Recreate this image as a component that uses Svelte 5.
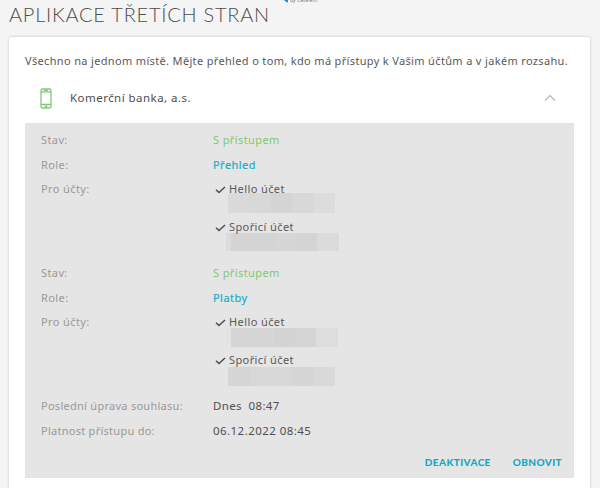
<script>
  const groups = [
    {
      role: 'Přehled',
      accounts: [
        { name: 'Hello účet', x: 15, top: 6, h: 20, cells: [[21, '#dadada'], [22, '#d8d8d8'], [21, '#d4d4d4'], [22, '#d8d8d8'], [21, '#dcdcdc']] },
        { name: 'Spořicí účet', x: 13, top: 7, h: 18, cells: [[5, '#dcdcdc'], [44, '#d4d4d4'], [22, '#d6d6d6'], [20, '#d4d4d4'], [22, '#dbdbdb']] }
      ]
    },
    {
      role: 'Platby',
      accounts: [
        { name: 'Hello účet', x: 13, top: 8, h: 19, cells: [[5, '#e3e3e3'], [43, '#d5d5d5'], [21, '#d3d3d3'], [21, '#d5d5d5'], [22, '#dddddd']] },
        { name: 'Spořicí účet', x: 15, top: 7.5, h: 19, cells: [[23, '#d5d5d5'], [41, '#d8d8d8'], [21, '#d6d6d6'], [22, '#d9d9d9']] }
      ]
    }
  ];
</script>

<div class="page">
  <div class="brand">
    <svg width="5" height="3" viewBox="0 0 5 3"><path d="M0 0H4V2L3 2.6Z" fill="#1495bd" /></svg>
    <span>by Cetelem</span>
  </div>
  <h1>APLIKACE TŘETÍCH STRAN</h1>
  <section class="card">
    <p class="intro">Všechno na jednom místě. Mějte přehled o tom, kdo má přístupy k Vašim účtům a v jakém rozsahu.</p>
    <div class="bank">
      <svg class="phone" width="12" height="21" viewBox="0 0 12 21" fill="none" stroke="#80c878" stroke-width="1.3">
        <rect x="1" y="1" width="10" height="19" rx="1.5" />
        <path d="M1 3.9H11M1 16.5H11M4 2.4H8" />
        <path d="M4.7 18.4H7.3" stroke-width="1.6" />
      </svg>
      <span class="bank-name">Komerční banka, a.s.</span>
      <svg class="chevron" width="12" height="8" viewBox="0 0 12 8" fill="none" stroke="#bfbfbf" stroke-width="1.5"><path d="M1.2 6.5L6 1.6L10.8 6.5" /></svg>
    </div>
    <div class="panel">
      {#each groups as g}
        <div class="group">
          <div class="row"><span class="label">Stav:</span><span class="green">S přístupem</span></div>
          <div class="row"><span class="label">Role:</span><span class="blue">{g.role}</span></div>
          <div class="row accounts">
            <span class="label">Pro účty:</span>
            <div>
              {#each g.accounts as a}
                <div class="account">
                  <div class="account-name">
                    <svg width="11" height="8" viewBox="0 0 11 8" fill="none" stroke="#4a4a4a" stroke-width="1.4"><path d="M1 3.7L4 6.6L10 1" /></svg>
                    <span>{a.name}</span>
                  </div>
                  <div class="mask" style="margin-left:{a.x}px;margin-top:{a.top - 6}px;height:{a.h}px">
                    {#each a.cells as [w, c]}<i style="width:{w}px;background:{c}"></i>{/each}
                  </div>
                </div>
              {/each}
            </div>
          </div>
        </div>
      {/each}
      <div class="row"><span class="label long">Poslední úprava souhlasu:</span><span class="dark dnes">Dnes&nbsp; 08:47</span></div>
      <div class="row"><span class="label long">Platnost přístupu do:</span><span class="dark datum">06.12.2022 08:45</span></div>
      <div class="actions"><span>DEAKTIVACE</span><span>OBNOVIT</span></div>
    </div>
  </section>
</div>

<style>
  :global(body) { background: #f4f4f4; overflow: hidden; }
  .page { width: 600px; height: 488px; overflow: hidden; box-sizing: border-box; background: #f4f4f4; font-family: "Noto Sans", sans-serif; font-size: 11px; color: #595959; white-space: nowrap; }
  .brand { height: 4px; padding-left: 284px; display: flex; align-items: flex-start; gap: 1px; color: #777; }
  .brand span { font-size: 5px; line-height: 6px; margin-top: -3px; letter-spacing: .1px; }
  h1 { margin: 0; padding-left: 9px; height: 33px; font: 300 20px/21px Lato, sans-serif; letter-spacing: .76px; color: #4c4c4c; }
  .card { margin: 0 10px 0 9px; height: 470px; box-sizing: border-box; padding: 14px 16px 0 16px; background: #fff; border-radius: 3px; box-shadow: 0 0 3px rgba(0, 0, 0, .2); }
  .intro { margin: 0; height: 20px; line-height: 20px; letter-spacing: .34px; }
  .bank { display: flex; align-items: center; height: 52px; box-sizing: border-box; padding: 2px 18px 0 15px; }
  .bank-name { margin: -1px 0 0 18px; font-size: 11.5px; letter-spacing: .46px; color: #4e4e4e; }
  .chevron { margin-left: auto; }
  .panel { height: 355px; box-sizing: border-box; padding: 5px 12px 0 16px; background: #e5e5e5; letter-spacing: .4px; }
  .group { height: 133.2px; }
  .row { display: flex; height: 24.6px; line-height: 24px; }
  .label { width: 172px; color: #999; flex: none; }
  .long { letter-spacing: .27px; }
  .green { color: #7dc972; }
  .blue { color: #20adc7; letter-spacing: .46px; -webkit-text-stroke: .2px #20adc7; }
  .dark { color: #505050; }
  .dnes { font-size: 11.5px; letter-spacing: .35px; }
  .datum { font-size: 11.5px; letter-spacing: .45px; }
  .accounts { height: auto; }
  .account { height: 37.8px; }
  .account-name { display: flex; align-items: center; gap: 3px; height: 24px; padding-left: 2px; margin-bottom: -8px; position: relative; z-index: 1; }
  .account-name svg { margin-top: 2px; }
  .mask { display: flex; margin-bottom: -8px; }
  .mask i { display: block; height: 100%; }
  .account + .account .mask { transform: translateY(1px); }
  .actions { display: flex; justify-content: flex-end; gap: 22px; margin-top: 6px; line-height: 24px; font-family: Lato, sans-serif; font-weight: 900; font-size: 10px; color: #12a8c4; }
</style>
